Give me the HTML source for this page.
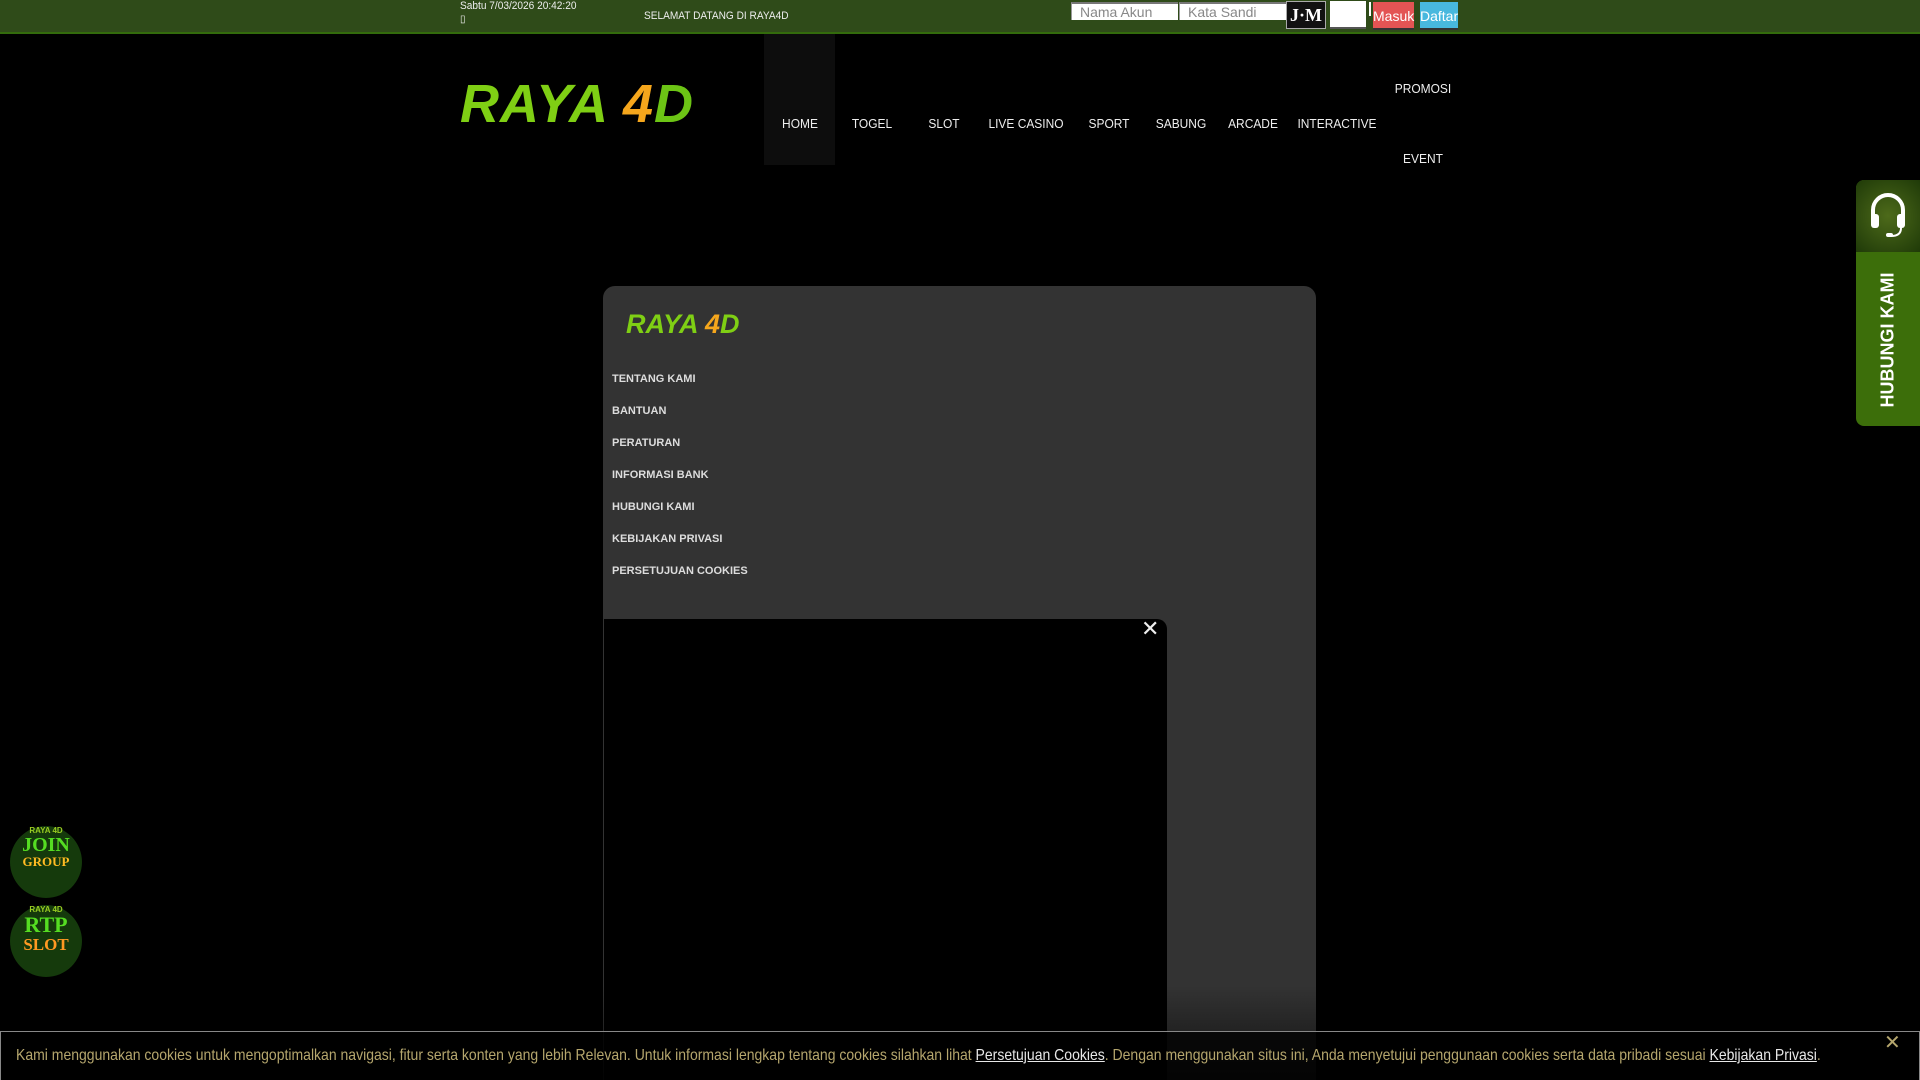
<!DOCTYPE html>
<html><head><meta charset="utf-8"><style>
*{margin:0;padding:0;box-sizing:border-box}
body{width:1920px;height:1080px;background:#000;position:relative;overflow:hidden;font-family:"Liberation Sans",sans-serif;color:#ddd}
.abs{position:absolute}
#top{left:0;top:0;width:1920px;background:#2f4b19;border-bottom:2px solid #336b0c;height:34px}
.inp{top:2px;height:18px;background:#fff;border-top:2px solid #777;border-left:1px solid #999;color:#888;font-size:14px;padding-left:8px;line-height:16px}
.btn{top:2px;height:28px;color:#fff;font-size:14px;line-height:28px;text-align:center;border-bottom:2px solid #333}
.nav{top:116px;font-size:13px;color:#eee;text-align:center;transform:translateX(-50%) scaleX(.92);white-space:nowrap}
.logo{font-weight:bold;font-style:italic}
.menu{left:612px;font-weight:bold;font-size:11px;color:#ddd}
#cookie{left:0;top:1031px;width:1920px;height:49px;background:rgba(0,0,0,.75);border:1px solid #888;border-bottom:none;color:#b5a66d;font-size:16px;padding:15px 0 0 15px;white-space:nowrap}
#cookie span{display:inline-block;transform:scaleX(.875);transform-origin:0 0}
#cookie u{color:#e8e8e8}
</style></head><body>
<div id="top" class="abs"></div>
<div class="abs" style="left:460px;top:0;font-size:11px;color:#eee;transform:scaleX(.92);transform-origin:0 0">Sabtu 7/03/2026 20:42:20</div>
<div class="abs" style="left:460px;top:14px;font-size:10px;color:#eee">▯</div>
<div class="abs" style="left:644px;top:10px;font-size:11px;color:#eee;transform:scaleX(.92);transform-origin:0 0">SELAMAT DATANG DI RAYA4D</div>
<div class="abs inp" style="left:1071px;width:107px">Nama Akun</div>
<div class="abs inp" style="left:1179px;width:107px">Kata Sandi</div>
<div class="abs" style="left:1286px;top:1px;width:40px;height:28px;background:#111;border:1px solid #aaa;color:#fff;font:bold 18px 'Liberation Serif',serif;text-align:center;line-height:26px">J·M</div>
<div class="abs" style="left:1330px;top:1px;width:36px;height:28px;background:#fff;border-bottom:2px solid #555"></div>
<div class="abs" style="left:1369px;top:2px;width:2px;height:14px;background:#fff"></div>
<div class="abs btn" style="left:1373px;width:41px;background:#e35454">Masuk</div>
<div class="abs btn" style="left:1420px;width:38px;background:#48b8de">Daftar</div>

<div class="abs logo" style="left:460px;top:76px;font-size:54px;line-height:56px;letter-spacing:1px;color:#7fcf14">RAYA <span style="color:#f5a61c">4</span><span style="color:#6cc415">D</span></div>

<div class="abs" style="left:764px;top:34px;width:71px;height:131px;background:#0d0d0d"></div>
<div class="abs nav" style="left:800px">HOME</div>
<div class="abs nav" style="left:872px">TOGEL</div>
<div class="abs nav" style="left:944px">SLOT</div>
<div class="abs nav" style="left:1026px">LIVE CASINO</div>
<div class="abs nav" style="left:1109px">SPORT</div>
<div class="abs nav" style="left:1181px">SABUNG</div>
<div class="abs nav" style="left:1253px">ARCADE</div>
<div class="abs nav" style="left:1337px">INTERACTIVE</div>
<div class="abs nav" style="left:1423px;top:81px">PROMOSI</div>
<div class="abs nav" style="left:1423px;top:151px">EVENT</div>

<div class="abs" style="left:603px;top:286px;width:713px;height:794px;background:linear-gradient(#333 0,#333 700px,#111 794px);border-radius:12px 12px 0 0"></div>
<div class="abs logo" style="left:626px;top:309px;font-size:27px;line-height:30px;letter-spacing:0;color:#7fcf14">RAYA <span style="color:#f5a61c">4</span>D</div>
<div class="abs menu" style="top:373px">TENTANG KAMI</div>
<div class="abs menu" style="top:405px">BANTUAN</div>
<div class="abs menu" style="top:437px">PERATURAN</div>
<div class="abs menu" style="top:469px">INFORMASI BANK</div>
<div class="abs menu" style="top:501px">HUBUNGI KAMI</div>
<div class="abs menu" style="top:533px">KEBIJAKAN PRIVASI</div>
<div class="abs menu" style="top:565px">PERSETUJUAN COOKIES</div>
<div class="abs" style="left:604px;top:619px;width:563px;height:461px;background:#000;border-radius:0 10px 0 0"></div>
<div class="abs" style="left:1141px;top:616px;font:22px 'Liberation Sans',sans-serif;color:#eee">✕</div>

<div class="abs" style="left:1856px;top:180px;width:64px;height:246px;border-radius:8px 0 0 8px;background:#3c6e0a;overflow:hidden">
 <div style="height:72px;background:radial-gradient(circle at 50% 50%,#4d6a1a,#1f3a08)"></div>
 <div class="abs" style="left:32px;top:160px;transform:translate(-50%,-50%) rotate(-90deg);font:bold 18px 'Liberation Sans',sans-serif;color:#fff;white-space:nowrap">HUBUNGI KAMI</div>
 <svg class="abs" style="left:12px;top:10px" width="40" height="50" viewBox="0 0 40 50"><path d="M5 28V20a15 15 0 0 1 30 0v8" fill="none" stroke="#fff" stroke-width="4"/><rect x="3" y="24" width="8" height="14" rx="3" fill="#fff"/><rect x="29" y="24" width="8" height="14" rx="3" fill="#fff"/><path d="M33 38q0 8-10 8" fill="none" stroke="#fff" stroke-width="2"/><rect x="18" y="43" width="7" height="4" rx="2" fill="#fff"/></svg>
</div>

<div class="abs" style="left:10px;top:826px;width:72px;height:72px;border-radius:50%;background:#153a0c;text-align:center;font:bold 8px 'Liberation Sans';color:#9c2;line-height:9px">RAYA 4D<div style="font:bold 20px 'Liberation Serif';color:#5d2;line-height:20px">JOIN</div><div style="font:bold 13px 'Liberation Serif';color:#fb2;line-height:14px">GROUP</div></div>
<div class="abs" style="left:10px;top:905px;width:72px;height:72px;border-radius:50%;background:#153a0c;text-align:center;font:bold 8px 'Liberation Sans';color:#9c2;line-height:9px">RAYA 4D<div style="font:bold 22px 'Liberation Serif';color:#5d2;line-height:22px">RTP</div><div style="font:bold 17px 'Liberation Serif';color:#f92;line-height:17px">SLOT</div></div>

<div id="cookie" class="abs"><span>Kami menggunakan cookies untuk mengoptimalkan navigasi, fitur serta konten yang lebih Relevan. Untuk informasi lengkap tentang cookies silahkan lihat <u>Persetujuan Cookies</u>. Dengan menggunakan situs ini, Anda menyetujui penggunaan cookies serta data pribadi sesuai <u>Kebijakan Privasi</u>.</span></div>
<div class="abs" style="left:1884px;top:1030px;font:20px 'Liberation Sans',sans-serif;color:#b5a66d">✕</div>
</body></html>
